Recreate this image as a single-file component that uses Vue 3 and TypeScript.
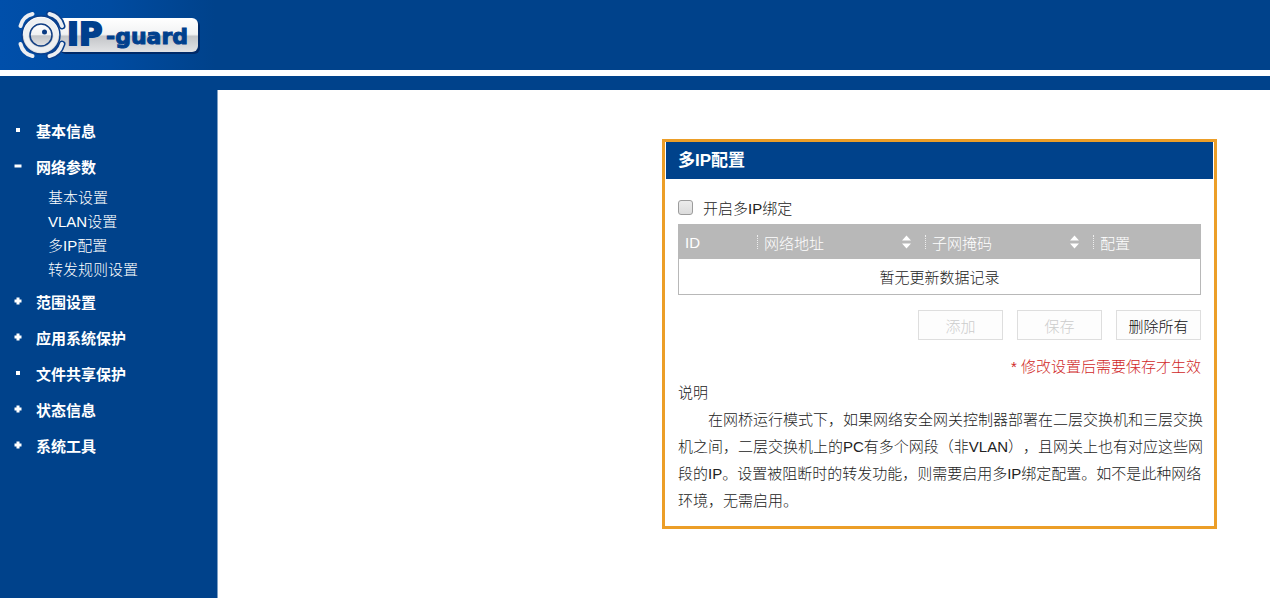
<script setup lang="ts">
import { ref } from 'vue'

interface NavItem {
  label: string
  mark: 'dot' | 'plus' | 'minus'
  children?: string[]
}

const nav: NavItem[] = [
  { label: '基本信息', mark: 'dot' },
  { label: '网络参数', mark: 'minus', children: ['基本设置', 'VLAN设置', '多IP配置', '转发规则设置'] },
  { label: '范围设置', mark: 'plus' },
  { label: '应用系统保护', mark: 'plus' },
  { label: '文件共享保护', mark: 'dot' },
  { label: '状态信息', mark: 'plus' },
  { label: '系统工具', mark: 'plus' },
]

const markPaths: Record<NavItem['mark'], string> = {
  dot: 'M2 2h4v4h-4z',
  plus: 'M2.5 0.5h3v2h2v3h-2v2h-3v-2h-2v-3h2z',
  minus: 'M0.5 2.5h7v3h-7z',
}

const columns = [
  { label: 'ID', sortable: false, cls: 'c-id' },
  { label: '网络地址', sortable: true, cls: 'c-addr' },
  { label: '子网掩码', sortable: true, cls: 'c-mask' },
  { label: '配置', sortable: false, cls: 'c-conf' },
]

const enabled = ref(false)
</script>

<template>
  <div class="page" lang="zh-CN">
    <header class="banner">
      <svg class="logo" width="190" height="54" viewBox="0 0 190 54" role="img" aria-label="IP-guard">
        <defs>
          <linearGradient id="plate" x1="0" y1="0" x2="0" y2="1">
            <stop offset="0" stop-color="#ffffff" />
            <stop offset="0.48" stop-color="#f1f2f3" />
            <stop offset="0.54" stop-color="#c3c5c8" />
            <stop offset="1" stop-color="#e2e3e5" />
          </linearGradient>
        </defs>
        <rect x="40" y="12" width="140" height="34" rx="6" fill="#002a68" />
        <rect x="38" y="10" width="140" height="34" rx="6" fill="url(#plate)" />
        <g fill="none" stroke-linecap="round">
          <g stroke="#0a3f8c" stroke-width="7">
            <path d="M29.500 6Q39 8 42 18" />
            <path d="M29.500 48Q39 46 42 36" />
          </g>
          <g stroke="#eceef2" stroke-width="4">
            <path d="M0.500 18Q3 8 12.500 6" />
            <path d="M29.500 6Q39 8 42 18" />
            <path d="M0.500 36Q3 46 12.500 48" />
            <path d="M29.500 48Q39 46 42 36" />
          </g>
        </g>
        <circle cx="21" cy="27" r="19" fill="url(#plate)" stroke="#0a3f8c" stroke-width="1.500" />
        <circle cx="21" cy="27" r="15" fill="none" stroke="#eef0f2" stroke-width="5" />
        <circle cx="21" cy="27" r="11" fill="url(#plate)" stroke="#123f83" stroke-width="1.500" />
        <circle cx="24.500" cy="24" r="2.500" fill="#0a3b82" />
        <text class="ip" x="47" y="37">IP</text>
        <text class="guard" x="86" y="36">-guard</text>
      </svg>
    </header>
    <div class="strip"></div>

    <div class="body">
      <nav class="side">
        <ul>
          <li v-for="item in nav" :key="item.label">
            <a href="#" class="top">
              <svg class="mark" width="8" height="8" viewBox="0 0 8 8" aria-hidden="true">
                <path :d="markPaths[item.mark]" fill="#fff" />
              </svg>
              {{ item.label }}
            </a>
            <ul v-if="item.children" class="sub">
              <li v-for="child in item.children" :key="child"><a href="#">{{ child }}</a></li>
            </ul>
          </li>
        </ul>
      </nav>

      <main class="main">
        <section class="panel">
          <h1>多IP配置</h1>
          <div class="inner">
            <label class="toggle">
              <input v-model="enabled" type="checkbox" />
              <span>开启多IP绑定</span>
            </label>
            <table>
              <thead>
                <tr>
                  <th v-for="col in columns" :key="col.label" :class="col.cls" scope="col">
                    <div class="cell">
                      <span>{{ col.label }}</span>
                      <button v-if="col.sortable" type="button" class="sort" :aria-label="col.label">
                        <svg width="9" height="14" viewBox="0 0 9 14">
                          <path d="M4.500 0.500L9 5.500H0zM0 8.500H9L4.500 13.500z" fill="#fff" />
                        </svg>
                      </button>
                    </div>
                  </th>
                </tr>
              </thead>
              <tbody>
                <tr>
                  <td colspan="4">暂无更新数据记录</td>
                </tr>
              </tbody>
            </table>
            <div class="actions">
              <button type="button" disabled>添加</button>
              <button type="button" disabled>保存</button>
              <button type="button">删除所有</button>
            </div>
            <p class="warn">* 修改设置后需要保存才生效</p>
            <h2>说明</h2>
            <p class="desc">在网桥运行模式下，如果网络安全网关控制器部署在二层交换机和三层交换机之间，二层交换机上的PC有多个网段（非VLAN），且网关上也有对应这些网段的IP。设置被阻断时的转发功能，则需要启用多IP绑定配置。如不是此种网络环境，无需启用。</p>
          </div>
        </section>
      </main>
    </div>
  </div>
</template>

<style>
body {
  margin: 0;
}
</style>

<style scoped>
.page {
  display: flex;
  flex-direction: column;
  min-height: 100vh;
  background: #fff;
  color: #222;
  font-family: "Liberation Sans", "Noto Sans CJK SC", sans-serif;
  font-size: 15px;
  font-weight: 300;
  text-spacing-trim: space-all;
}
ul {
  list-style: none;
  margin: 0;
  padding: 0;
}
.banner {
  box-sizing: border-box;
  height: 70px;
  padding: 8px 0 0 20px;
  background: linear-gradient(90deg, #004faa 0, #004ba0 110px, #00428b 215px);
}
.logo {
  display: block;
  overflow: visible;
}
.logo text {
  font-family: "DejaVu Sans", sans-serif;
  font-weight: 700;
  fill: #00408d;
  stroke: #00408d;
}
.logo .ip {
  font-size: 32px;
  stroke-width: 2px;
}
.logo .guard {
  font-size: 22px;
  stroke-width: 1px;
}
.strip {
  height: 14px;
  border-top: 6px solid #fff;
  background: #00428b;
}
.body {
  flex: 1;
  display: flex;
}
.side {
  box-sizing: border-box;
  flex: 0 0 218px;
  padding-top: 22px;
  border-right: 1px solid #7da0c5;
  background: #00428b;
}
.side a {
  color: #fff;
  text-decoration: none;
}
.top {
  display: flex;
  align-items: center;
  gap: 14px;
  height: 36px;
  padding-left: 14px;
  font-weight: 700;
}
.sub {
  padding: 2px 0 1px 48px;
}
.sub li {
  line-height: 24px;
}
.main {
  flex: 1;
  display: flex;
  justify-content: flex-end;
  align-items: flex-start;
  padding: 49px 53px 49px 20px;
}
.panel {
  box-sizing: border-box;
  width: 100%;
  max-width: 555px;
  padding: 0 1px 1px;
  border: 3px solid #ec9e28;
}
h1 {
  margin: 0;
  padding-left: 12px;
  background: #00428b;
  color: #fff;
  font-size: 17px;
  font-weight: 700;
  line-height: 37px;
}
.inner {
  padding: 16px 12px 11px;
}
.toggle {
  display: flex;
  align-items: center;
  gap: 10px;
  height: 24px;
  margin-bottom: 5px;
}
.toggle input {
  appearance: none;
  box-sizing: border-box;
  width: 15px;
  height: 15px;
  margin: 0;
  border: 1px solid #9c9c9c;
  border-radius: 3px;
  background: linear-gradient(#ececec, #dcdcdc);
}
.toggle input:checked {
  background: #00428b;
}
table {
  width: 100%;
  table-layout: fixed;
  border-collapse: separate;
  border-spacing: 0;
  border: 1px solid #b8b8b8;
}
th {
  height: 34px;
  padding: 0;
  background: #b8b8b8;
  color: #fff;
  font-weight: 300;
  text-align: left;
}
.c-id {
  width: 78px;
}
.c-addr,
.c-mask {
  width: 168px;
}
.cell {
  display: flex;
  align-items: center;
  justify-content: space-between;
  height: 14px;
  padding: 0 14px 0 6px;
}
th + th .cell {
  border-left: 1px dotted #eee;
}
.sort {
  display: block;
  height: 14px;
  padding: 0;
  border: 0;
  background: none;
}
.sort svg {
  display: block;
}
td {
  height: 35px;
  padding: 0;
  text-align: center;
}
.actions {
  display: flex;
  justify-content: flex-end;
  gap: 14px;
  margin-top: 15px;
}
.actions button {
  box-sizing: border-box;
  width: 85px;
  height: 30px;
  padding: 0;
  border: 1px solid #dedede;
  background: #fdfdfd;
  color: #111;
  font: inherit;
}
.actions button:disabled {
  color: #ccc;
}
.warn {
  margin: 14px 0 0;
  color: #d02828;
  line-height: 25px;
  text-align: right;
}
h2 {
  margin: 0;
  font-size: 15px;
  font-weight: 300;
  line-height: 27px;
}
.desc {
  margin: 0 -8px 0 0;
  line-height: 27px;
  text-indent: 2em;
}
</style>
